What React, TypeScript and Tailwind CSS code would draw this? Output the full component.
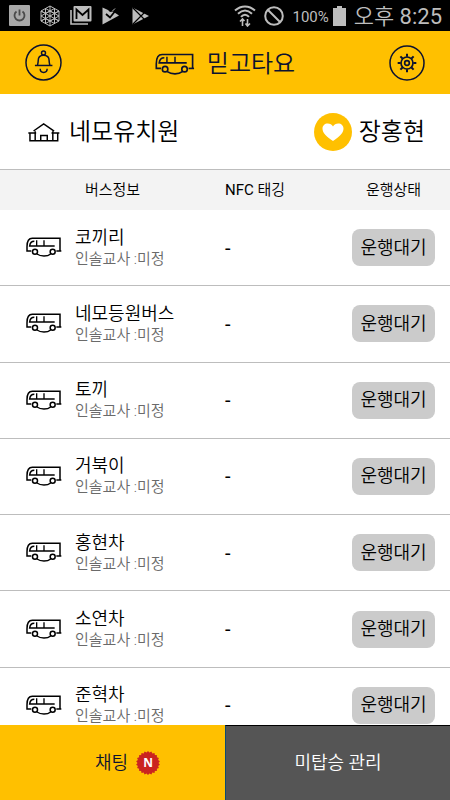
import type { ReactNode } from 'react';

type Bus = {
  id: number;
  name: string;
  teacher: string;
  tag: string;
  status: string;
};

const buses: Bus[] = [
  { id: 1, name: '코끼리', teacher: '미정', tag: '-', status: '운행대기' },
  { id: 2, name: '네모등원버스', teacher: '미정', tag: '-', status: '운행대기' },
  { id: 3, name: '토끼', teacher: '미정', tag: '-', status: '운행대기' },
  { id: 4, name: '거북이', teacher: '미정', tag: '-', status: '운행대기' },
  { id: 5, name: '홍현차', teacher: '미정', tag: '-', status: '운행대기' },
  { id: 6, name: '소연차', teacher: '미정', tag: '-', status: '운행대기' },
  { id: 7, name: '준혁차', teacher: '미정', tag: '-', status: '운행대기' },
];

function BusIcon({ className }: { className: string }) {
  return (
    <svg viewBox="78 82 108 60" className={className} fill="none" stroke="currentColor" strokeWidth="4.500">
      <path d="M94 124H81V111C81 97 86 86 97 86H180V124" />
      <path d="M169 124H184" />
      <path d="M103 95C94 95 90 100 89 109H164" />
      <path d="M110 92V109M132 92V109" strokeWidth="4" />
      <circle cx="105" cy="126" r="7.500" />
      <circle cx="158" cy="126" r="7.500" />
      <path d="M111 133C122 141 142 141 152 133" />
    </svg>
  );
}

function BellIcon() {
  return (
    <svg viewBox="75 42 112 112" className="size-[37px]" fill="none" stroke="currentColor" strokeWidth="4.500">
      <circle cx="131" cy="98" r="53" />
      <circle cx="131" cy="69" r="6" />
      <path d="M113 106C114 101 115 97 115 92C115 82 121 76 131 76S148 82 148 92C148 97 149 101 150 106" />
      <path d="M105 107H158" />
      <path d="M121 117C121 124 125 128 131.500 128S142 124 142 117" />
    </svg>
  );
}

function GearIcon() {
  return (
    <svg viewBox="-54 -54 108 108" className="size-[36px]" fill="none" stroke="currentColor" strokeWidth="4.500">
      <circle r="51" />
      <circle r="18" strokeWidth="5" />
      <circle r="7" strokeWidth="5" />
      {[0, 45, 90, 135, 180, 225, 270, 315].map((deg) => (
        <path key={deg} d="M0 -19V-28" strokeWidth="6" transform={`rotate(${deg})`} />
      ))}
    </svg>
  );
}

function HouseIcon() {
  return (
    <svg viewBox="83 82 98 60" className="h-5 w-8" fill="none" stroke="currentColor" strokeWidth="4.500">
      <path d="M100 109L131 87L163 109" />
      <path d="M84 115H108M155 115H179" />
      <path d="M89 115V139H174V115M105 110V139M159 110V139" />
      <path d="M122 139V123H142V139" />
    </svg>
  );
}

function HeartBadge() {
  return (
    <svg viewBox="0 0 38 38" className="size-[38px]">
      <circle cx="19" cy="19" r="19" fill="#ffc000" />
      <path
        d="M19 28C13 24 8.500 20 8.500 15.700C8.500 12.500 10.800 10.500 13.700 10.500C16 10.500 18 11.700 19 13.500C20 11.700 22 10.500 24.300 10.500C27.200 10.500 29.500 12.500 29.500 15.700C29.500 20 25 24 19 28Z"
        fill="#fff"
      />
    </svg>
  );
}

// scalloped seal behind the "new" letter
const sealPoints = Array.from({ length: 44 }, (_, i) => {
  const r = i % 2 === 0 ? 12 : 10.5;
  const a = (i * Math.PI) / 22;
  return `${12 + r * Math.sin(a)},${12 - r * Math.cos(a)}`;
}).join(' ');

function NewBadge() {
  return (
    <span className="grid size-6 place-items-center">
      <svg viewBox="0 0 24 24" className="col-start-1 row-start-1 size-6">
        <polygon points={sealPoints} fill="#ca2420" />
      </svg>
      <span className="col-start-1 row-start-1 font-['Open_Sans',sans-serif] text-xs leading-none font-bold text-white">N</span>
    </span>
  );
}

function StatusBar() {
  return (
    <div className="flex h-[31px] shrink-0 items-center justify-between bg-black pr-2 pl-[9px] text-[#bdbdbd]">
      <div className="flex items-center gap-[10px]">
        <svg viewBox="0 0 21 21" className="size-[21px]">
          <rect width="21" height="21" rx="1" fill="#a8a8a8" />
          <path d="M7.500 6.500A5 5 0 1 0 13.500 6.500M10.500 4.500V10.500" fill="none" stroke="#4a4a4a" strokeWidth="1.8" />
        </svg>
        <svg viewBox="0 0 20 22" className="h-[22px] w-5" fill="none" stroke="currentColor" strokeWidth="1">
          <path d="M10 1L19 6V16L10 21L1 16V6Z" />
          <path d="M10 1V21M1 6L19 16M19 6L1 16M5.500 3.500V18.500M14.500 3.500V18.500M1 11L10 6L19 11L10 16Z" />
          <path d="M5.500 3.500L14.500 8.500L19 6M14.500 3.500L5.500 8.500L1 6M1 16L5.500 13.500L14.500 18.500M19 16L14.500 13.500L5.500 18.500" />
        </svg>
        <svg viewBox="0 0 22 19" className="h-[19px] w-[22px]">
          <path d="M1 4V18H18" fill="none" stroke="currentColor" strokeWidth="1.600" />
          <rect x="3.500" y="0" width="18" height="15.500" rx="1" fill="currentColor" />
          <path d="M6.500 13V3.500L12.500 9L18.500 3.500V13" fill="none" stroke="#000" strokeWidth="1.800" />
        </svg>
        <svg viewBox="0 0 17 18" className="h-[18px] w-[17px]">
          <path d="M0.500 0.500L6 3L8 5L11 4.500L17 8.500L0.500 17.500Z" fill="currentColor" />
          <path d="M4 7L8 10.500L14 3" fill="none" stroke="#000" strokeWidth="1.800" />
          <path d="M10.500 4L13 1.500" stroke="currentColor" strokeWidth="1" />
        </svg>
        <svg viewBox="0 0 17 18" className="ml-[3px] h-[18px] w-[17px]">
          <path d="M0.500 0.500L17 9L0.500 17.500Z" fill="currentColor" />
          <path d="M0.500 0.500L13 13M0.500 17.500L13 5" fill="none" stroke="#000" strokeWidth="1.200" />
        </svg>
      </div>
      <div className="flex items-center">
        <svg viewBox="0 0 22 22" className="size-[22px]" fill="none" stroke="currentColor" strokeWidth="2">
          <path d="M1 5.500C7 0 15 0 21 5.500M4 8.700C8.500 4.500 13.500 4.500 18 8.700M7 11.900C9.500 9 12.500 9 15 11.900" />
          <path d="M8.500 21V14M6 16.500L8.500 14L10.500 16M13.500 14V21M11.500 18.500L13.500 21L16 18.500" strokeWidth="1.600" />
        </svg>
        <svg viewBox="0 0 20 20" className="ml-2 size-5" fill="none" stroke="currentColor" strokeWidth="2">
          <circle cx="10" cy="10" r="8.800" />
          <path d="M4 4L16 16" />
        </svg>
        <span className="ml-2 pt-0.5 text-[15px] leading-5 font-normal">100%</span>
        <svg viewBox="0 0 13 20" className="ml-1 h-5 w-[13px]" fill="currentColor">
          <path d="M4 0H9V2H13V20H0V2H4Z" />
        </svg>
        <span className="ml-2 pt-0.5 text-[22px] leading-none">
          오후 <span className="font-normal">8:25</span>
        </span>
      </div>
    </div>
  );
}

function HeadCell({ className, children }: { className: string; children: ReactNode }) {
  return (
    <th scope="col" className={`h-10 bg-[#f3f3f3] p-0 text-[15px] font-[350] ${className}`}>
      {children}
    </th>
  );
}

function App() {
  return (
    <div className="flex h-screen flex-col overflow-hidden bg-white font-[Roboto,'Noto_Sans_CJK_KR',sans-serif] font-[350] text-black">
      <StatusBar />

      <header className="grid h-[63px] shrink-0 grid-cols-[1fr_auto_1fr] items-center bg-[#ffc000] px-[25px] text-[#0c1230]">
        <button type="button" aria-label="알림" className="justify-self-start">
          <BellIcon />
        </button>
        <h1 className="flex items-center gap-3 pt-0.5 text-2xl font-[350]">
          <BusIcon className="h-[22px] w-10" />
          믿고타요
        </h1>
        <button type="button" aria-label="설정" className="justify-self-end">
          <GearIcon />
        </button>
      </header>

      <section className="flex h-[75px] shrink-0 items-center justify-between pr-[25px] pl-7 text-2xl">
        <div className="flex items-center gap-[9px]">
          <HouseIcon />
          네모유치원
        </div>
        <div className="flex items-center gap-[7px]">
          <HeartBadge />
          장홍현
        </div>
      </section>

      <main className="min-h-0 flex-1 overflow-y-auto border-t border-[#bdbdbd] [scrollbar-width:none]">
        <table className="h-[574px] w-full table-fixed border-separate border-spacing-0">
          <thead>
            <tr>
              <HeadCell className="w-1/2 text-center">버스정보</HeadCell>
              <HeadCell className="text-left">
                <span className="font-normal">NFC</span> 태깅
              </HeadCell>
              <HeadCell className="w-[98px] pr-[15px] text-center">운행상태</HeadCell>
            </tr>
          </thead>
          <tbody>
            {buses.map((bus) => (
              <tr key={bus.id}>
                <td className="border-b border-[#bdbdbd] p-0 pb-px">
                  <div className="flex items-center gap-[13px] pl-[26px]">
                    <BusIcon className="h-5 w-9" />
                    <div>
                      <div className="text-lg leading-[23px]">{bus.name}</div>
                      <div className="text-[15px] leading-5 text-[#6a6a6a]">인솔교사 :{bus.teacher}</div>
                    </div>
                  </div>
                </td>
                <td className="border-b border-[#bdbdbd] p-0 text-xl font-normal">{bus.tag}</td>
                <td className="border-b border-[#bdbdbd] p-0 pr-[15px]">
                  <button type="button" className="h-[37px] w-full rounded-lg bg-[#cbcbcb] text-lg">
                    {bus.status}
                  </button>
                </td>
              </tr>
            ))}
          </tbody>
        </table>
      </main>

      <nav className="grid h-[75px] shrink-0 grid-cols-2 text-lg">
        <button type="button" className="flex items-center justify-center gap-2 bg-[#ffc000] pl-[30px] text-[#0c1230]">
          채팅
          <NewBadge />
        </button>
        <button type="button" className="border-t border-l border-t-black border-l-[#0d4a70] bg-[#555] text-white">
          미탑승 관리
        </button>
      </nav>
    </div>
  );
}

export default App;
